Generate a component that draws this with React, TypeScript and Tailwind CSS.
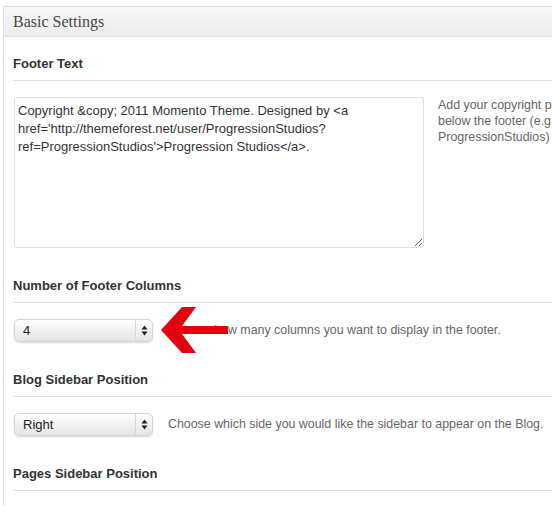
export default function App() {
    const sans = { fontFamily: '"Liberation Sans", Arial, sans-serif' };

    const SelectBox = ({ value }: { value: string }) => (
        <div className="relative ml-px flex h-[23px] w-[139px] items-center rounded-[5px] border border-[#d4d4d4] bg-gradient-to-b from-[#ffffff] to-[#e4e4e4] shadow-[0_1px_2px_rgba(0,0,0,0.15)]">
            <span className="flex-1 pl-[8px] text-[13px] text-[#222]">{value}</span>
            <span className="h-full w-px bg-[#d8d8d8]" />
            <span className="flex w-[16px] items-center justify-center">
                <svg width="7" height="11" viewBox="0 0 7 11">
                    <polygon points="3.5,0.5 6.5,4.5 0.5,4.5" fill="#222" />
                    <polygon points="0.5,6.5 6.5,6.5 3.5,10.5" fill="#222" />
                </svg>
            </span>
        </div>
    );

    const Heading = ({ label }: { label: string }) => (
        <div className="flex h-[35px] items-center border-b border-[#dfdfdf] pt-px text-[13px] font-bold text-[#333]">
            {label}
        </div>
    );

    return (
        <div className="relative h-[529px] w-[552px] overflow-hidden bg-white" style={sans}>
            <div className="ml-[3px] mt-[6px] h-[500px] w-[700px] border-l border-t border-[#dfdfdf]">
                <div className="flex h-[30px] items-center border-b border-[#dfdfdf] bg-gradient-to-b from-[#f9f9f9] to-[#ececec] pl-[9px]">
                    <span
                        className="text-[16px] text-[#464646]"
                        style={{ fontFamily: '"Liberation Serif", "DejaVu Serif", serif' }}
                    >
                        Basic Settings
                    </span>
                </div>

                <div className="pl-[9px] pt-[9px]">
                    <Heading label="Footer Text" />
                    <div className="mb-[20px] mt-[16px] flex items-start">
                        <textarea
                            readOnly
                            className="ml-px h-[151px] w-[410px] resize rounded-[3px] border border-[#dfdfdf] bg-white px-[3px] pt-[4px] text-[13px] leading-[18px] text-[#333] outline-none"
                            style={sans}
                            defaultValue={
                                "Copyright &copy; 2011 Momento Theme. Designed by <a\nhref='http://themeforest.net/user/ProgressionStudios?\nref=ProgressionStudios'>Progression Studios</a>."
                            }
                        />
                        <div className="ml-[14px] whitespace-nowrap text-[12.4px] leading-[16px] text-[#666]">
                            <div>Add your copyright placed here</div>
                            <div>below the footer (e.g. Copyright 2011</div>
                            <div>ProgressionStudios)</div>
                        </div>
                    </div>

                    <Heading label="Number of Footer Columns" />
                    <div className="mb-[20px] mt-[16px] flex items-center">
                        <SelectBox value="4" />
                        <span className="ml-[15px] whitespace-nowrap text-[12.4px] text-[#666]">
                            Choose how many columns you want to display in the footer.
                        </span>
                    </div>

                    <Heading label="Blog Sidebar Position" />
                    <div className="mb-[20px] mt-[16px] flex items-center">
                        <SelectBox value="Right" />
                        <span className="ml-[15px] whitespace-nowrap text-[12.4px] text-[#666]">
                            Choose which side you would like the sidebar to appear on the Blog.
                        </span>
                    </div>

                    <Heading label="Pages Sidebar Position" />
                </div>
            </div>

            {/* red callout arrow */}
            <svg className="pointer-events-none absolute left-0 top-0" width="552" height="529">
                <polygon
                    points="161,330 182,307 196,307 182,326 228,326 228,334 182,334 196,353 182,353"
                    fill="#e3000f"
                />
            </svg>
        </div>
    );
}
